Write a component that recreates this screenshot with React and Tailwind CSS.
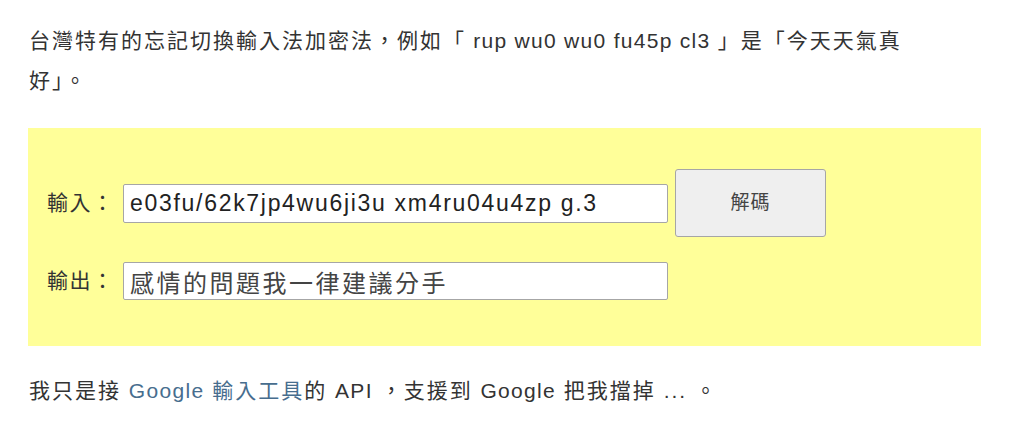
import React, { useState } from 'react';

const Code = ({ children }) => <span className="tracking-[1.3px]">{children}</span>;

const App = () => {
    const [input, setInput] = useState('e03fu/62k7jp4wu6ji3u xm4ru04u4zp g.3');
    const [output] = useState('感情的問題我一律建議分手');

    return (
        <div lang="zh-Hant-TW" className="w-[1024px] h-[428px] bg-white pl-[29px] pt-[21px] text-[#333] font-['Liberation_Sans','Noto_Sans_CJK_TC',sans-serif]">
            {/* 說明 */}
            <p className="w-[900px] text-[21px] leading-[40px] tracking-[2px]">
                台灣特有的忘記切換輸入法加密法，例如「<Code> rup wu0 wu0 fu45p cl3 </Code>」是「今天天氣真<br />好」。
            </p>

            {/* 解碼區 */}
            <div className="mt-[27px] -ml-px w-[953px] h-[218px] bg-[#ffff99] pt-[41px] pl-[19px]">
                <div className="flex items-center h-[68px]">
                    <span className="w-[76px] text-[21px] tracking-[1.5px]">輸入：</span>
                    <input
                        type="text"
                        value={input}
                        onChange={(e) => setInput(e.target.value)}
                        className="w-[545px] h-[39px] bg-white border border-[#a6a6a6] rounded-[2px] pl-[6px] text-[23px] tracking-[1.7px] text-[#222] outline-none"
                    />
                    <button className="ml-[7px] w-[151px] h-[68px] bg-[#efefef] border border-[#a6a6a6] rounded-[3px] text-[19px] tracking-[1px] text-[#444]">
                        解碼
                    </button>
                </div>
                <div className="flex items-center mt-[25px]">
                    <span className="w-[76px] text-[21px] tracking-[1.5px]">輸出：</span>
                    <input
                        type="text"
                        value={output}
                        readOnly
                        className="w-[545px] h-[38px] bg-white border border-[#a6a6a6] rounded-[2px] pl-[6px] text-[24px] tracking-[2.5px] text-[#444] outline-none"
                    />
                </div>
            </div>

            {/* 附註 */}
            <p className="mt-[25px] text-[21px] leading-[40px] tracking-[2px]">
                我只是接 <a href="#" className="text-[#476d8e]"><Code>Google</Code> 輸入工具</a>的 <Code>API</Code> ，支援到 <Code>Google</Code> 把我擋掉 ... 。
            </p>
        </div>
    );
};

export default App;
